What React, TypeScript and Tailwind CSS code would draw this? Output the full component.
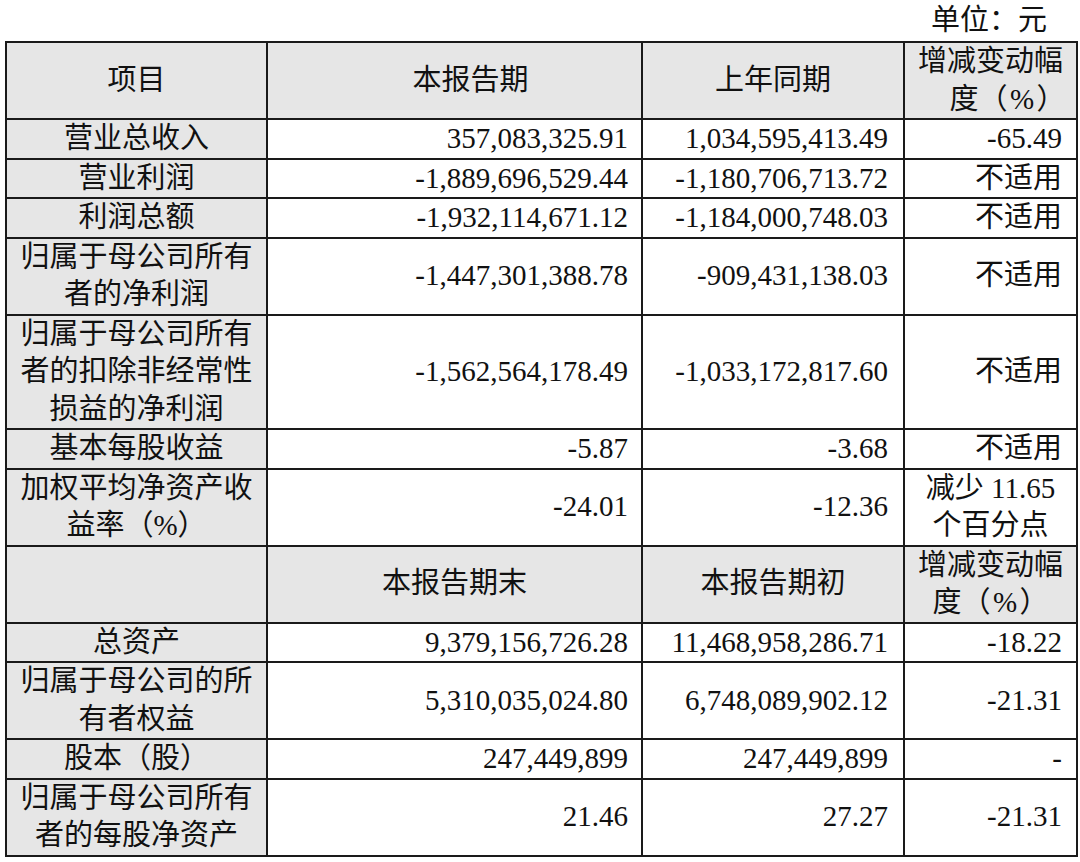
import type React from "react"

type Row = {
  label: string[]
  a: string
  b: string
  c: string | string[]
}

const top: Row[] = [
  { label: ["营业总收入"], a: "357,083,325.91", b: "1,034,595,413.49", c: "-65.49" },
  { label: ["营业利润"], a: "-1,889,696,529.44", b: "-1,180,706,713.72", c: "不适用" },
  { label: ["利润总额"], a: "-1,932,114,671.12", b: "-1,184,000,748.03", c: "不适用" },
  { label: ["归属于母公司所有", "者的净利润"], a: "-1,447,301,388.78", b: "-909,431,138.03", c: "不适用" },
  {
    label: ["归属于母公司所有", "者的扣除非经常性", "损益的净利润"],
    a: "-1,562,564,178.49",
    b: "-1,033,172,817.60",
    c: "不适用",
  },
  { label: ["基本每股收益"], a: "-5.87", b: "-3.68", c: "不适用" },
  { label: ["加权平均净资产收", "益率（%）"], a: "-24.01", b: "-12.36", c: ["减少 11.65", "个百分点"] },
]

const bottom: Row[] = [
  { label: ["总资产"], a: "9,379,156,726.28", b: "11,468,958,286.71", c: "-18.22" },
  { label: ["归属于母公司的所", "有者权益"], a: "5,310,035,024.80", b: "6,748,089,902.12", c: "-21.31" },
  { label: ["股本（股）"], a: "247,449,899", b: "247,449,899", c: "-" },
  { label: ["归属于母公司所有", "者的每股净资产"], a: "21.46", b: "27.27", c: "-21.31" },
]

const cell = "border-2 border-[#1a1a1a] p-0 align-middle"
const gray = "bg-[#e6e6e6]"

function Lines({ items }: { items: string[] }) {
  return (
    <>
      {items.map((t, i) => (
        <div key={i}>{t}</div>
      ))}
    </>
  )
}

// header "增减变动幅度（%）" — percent sign padded to a full em like the pdf
function Change({ shift }: { shift?: boolean }) {
  return (
    <>
      <div>增减变动幅</div>
      <div className={shift ? "pl-[34px]" : ""}>
        度（<span className="px-[2.5px]">%</span>）
      </div>
    </>
  )
}

function DataRow({ row }: { row: Row }) {
  return (
    <tr>
      <td className={`${cell} ${gray} text-center`}>
        <Lines items={row.label} />
      </td>
      <td className={`${cell} text-right pr-[13px]`}>{row.a}</td>
      <td className={`${cell} text-right pr-[15px]`}>{row.b}</td>
      {Array.isArray(row.c) ? (
        <td className={`${cell} text-center`}>
          <Lines items={row.c} />
        </td>
      ) : (
        <td className={`${cell} text-right pr-[14px]`}>{row.c}</td>
      )}
    </tr>
  )
}

export default function App() {
  return (
    <div
      className="w-[1080px] h-[862px] bg-white text-[#111] text-[29px] leading-[37.5px]"
      style={{ fontFamily: "'Liberation Serif', 'Noto Sans CJK SC', serif" } as React.CSSProperties}
    >
      <div className="h-[41px] leading-[40px] text-right pr-[33px]">单位：元</div>
      <table className="ml-[5px] w-[1071px] table-fixed border-collapse">
        <colgroup>
          <col className="w-[261px]" />
          <col className="w-[375px]" />
          <col className="w-[262px]" />
          <col className="w-[173px]" />
        </colgroup>
        <tbody>
          <tr className={gray}>
            <td className={`${cell} text-center`}>项目</td>
            <td className={`${cell} text-center pl-[32px]`}>本报告期</td>
            <td className={`${cell} text-center`}>上年同期</td>
            <td className={`${cell} text-center`}>
              <Change shift />
            </td>
          </tr>
          {top.map((r, i) => (
            <DataRow key={i} row={r} />
          ))}
          <tr className={gray}>
            <td className={cell}></td>
            <td className={`${cell} text-center`}>本报告期末</td>
            <td className={`${cell} text-center`}>本报告期初</td>
            <td className={`${cell} text-center`}>
              <Change />
            </td>
          </tr>
          {bottom.map((r, i) => (
            <DataRow key={i} row={r} />
          ))}
        </tbody>
      </table>
    </div>
  )
}
